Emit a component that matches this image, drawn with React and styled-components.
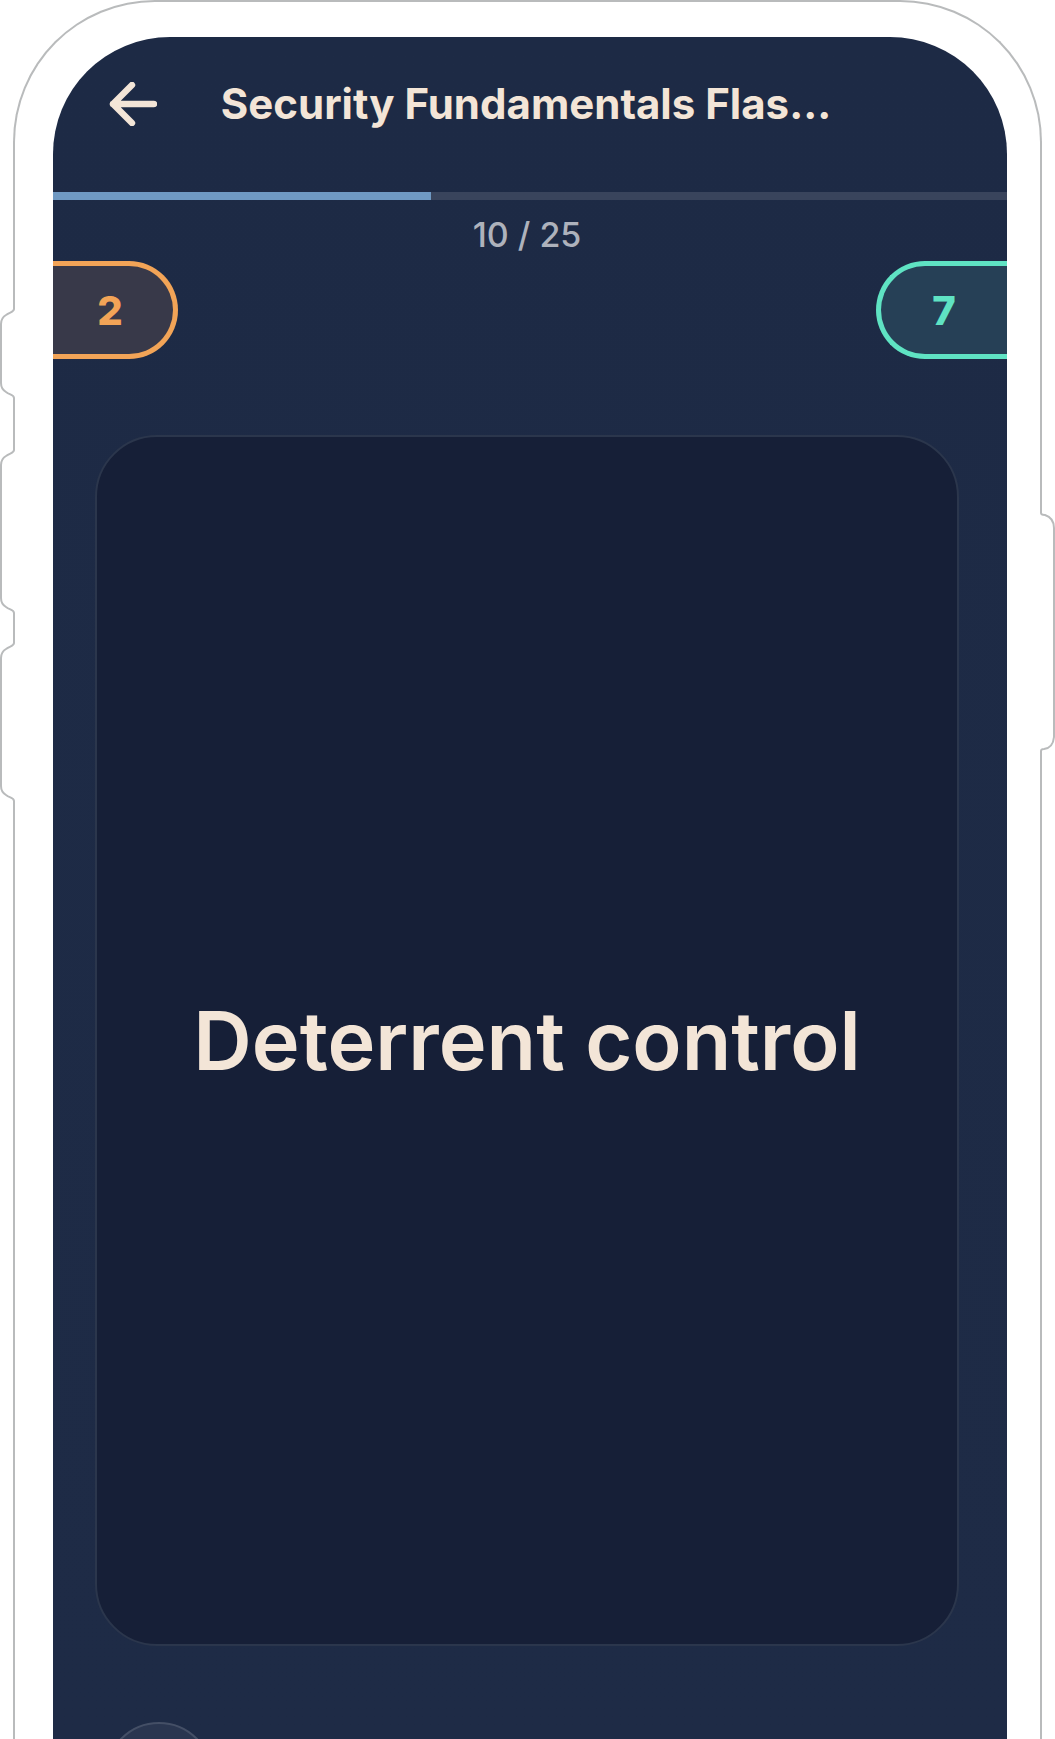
import styled, { createGlobalStyle } from "styled-components";

const GlobalStyle = createGlobalStyle`
  * {
    box-sizing: border-box;
  }

  body {
    margin: 0;
    background: #ffffff;
    font-family: Inter, "Liberation Sans", sans-serif;
  }
`;

const Phone = styled.div`
  display: flex;
  height: 100vh;
  overflow: hidden;
`;

const Rail = styled.div`
  position: relative;
  z-index: 1;
  flex: none;
  width: 13px;
  display: flex;
  flex-direction: column;
  align-items: ${(props) => (props.$right ? "flex-end" : "flex-start")};
  padding-top: ${(props) => (props.$right ? "513px" : "309px")};
`;

const SideKey = styled.svg`
  flex: none;
  display: block;
  width: 15px;
  height: ${(props) => props.$height}px;
  margin-bottom: ${(props) => props.$gap || 0}px;
  fill: none;
`;

const Bezel = styled.div`
  flex: 1;
  min-width: 0;
  display: flex;
  padding: 35px 33px 0 38px;
  border: 2px solid #b9bbbc;
  border-bottom: none;
  border-radius: 142px 142px 0 0;
  background: #ffffff;
`;

const Screen = styled.main`
  flex: 1;
  min-width: 0;
  display: flex;
  flex-direction: column;
  overflow: hidden;
  border-radius: 117px 117px 0 0;
  background: linear-gradient(#1d2a45, #1e2b46);
  color: #f3e5d7;
`;

const Header = styled.header`
  flex: none;
  display: grid;
  grid-template-columns: 48px 1fr 48px;
  align-items: center;
  height: 155px;
  padding: 0 64px 22px 56px;
`;

const BackButton = styled.button`
  display: flex;
  padding: 0;
  border: none;
  background: none;
  color: inherit;
  cursor: pointer;
`;

const Title = styled.h1`
  margin: 0;
  font-size: 42px;
  font-weight: 700;
  line-height: 52px;
  text-align: center;
  white-space: nowrap;
`;

/* runs under the bezel on both sides */
const Track = styled.div`
  flex: none;
  height: 8px;
  margin: 0 -18px;
  background: #39445c;
`;

const Fill = styled.div`
  height: 100%;
  background: #6f99c3;
`;

const Counter = styled.p`
  flex: none;
  margin: 0;
  padding: 15px 6px 6px 0;
  color: #aeb2bc;
  font-size: 34px;
  font-weight: 500;
  line-height: 40px;
  text-align: center;
`;

const Scores = styled.div`
  flex: none;
  display: flex;
  justify-content: space-between;
`;

const Score = styled.div`
  display: flex;
  align-items: center;
  justify-content: center;
  width: ${(props) => (props.$right ? "131px" : "125px")};
  height: 98px;
  border: 5px solid ${(props) => props.$color};
  background: ${(props) => props.$fill};
  color: ${(props) => props.$color};
  font-size: 40px;
  font-weight: 800;
  ${(props) =>
    props.$right
      ? "border-right: none; border-radius: 49px 0 0 49px;"
      : "padding-right: 6px; border-left: none; border-radius: 0 49px 49px 0;"}
`;

const Card = styled.section`
  flex: 1;
  min-height: 0;
  display: flex;
  align-items: center;
  justify-content: center;
  margin: 76px 48px 0 42px;
  border: 2px solid #2b364c;
  border-radius: 62px;
  background: #161f37;
`;

const Term = styled.h2`
  margin: 0;
  font-size: 81px;
  font-weight: 600;
  line-height: 104px;
  text-align: center;
`;

const Controls = styled.footer`
  flex: none;
  height: 93px;
  padding: 76px 52px 0;
  overflow: hidden;
`;

const RoundButton = styled.button`
  display: block;
  width: 108px;
  height: 108px;
  border: 2px solid #444f66;
  border-radius: 50%;
  background: #2a3650;
  cursor: pointer;
`;

function LeftKey({ height, gap }) {
  const h = height;
  return (
    <SideKey $height={h} $gap={gap} viewBox={`0 0 15 ${h}`} aria-hidden="true">
      <path d={`M11 0H15V${h}H11Z`} fill="#fff" />
      <path
        d={`M14 0C14 3 10 3 6 6Q1 9 1 15V${h - 15}Q1 ${h - 9} 6 ${h - 6}C10 ${h - 3} 14 ${h - 3} 14 ${h}`}
        stroke="#b9bbbc"
        strokeWidth="2"
        fill="#fff"
      />
    </SideKey>
  );
}

function RightKey({ height }) {
  const h = height;
  return (
    <SideKey $height={h} viewBox={`0 0 15 ${h}`} aria-hidden="true">
      <path d={`M0 0H4V${h}H0Z`} fill="#fff" />
      <path
        d={`M1 0Q1 2 5 2Q14 5 14 15V${h - 14}Q13 ${h - 3} 4 ${h - 2}Q1 ${h - 2} 1 ${h}`}
        stroke="#b9bbbc"
        strokeWidth="2"
        fill="#fff"
      />
    </SideKey>
  );
}

function App() {
  const current = 10;
  const total = 25;

  return (
    <>
      <GlobalStyle />
      <Phone>
        <Rail>
          <LeftKey height={89} gap={52} />
          <LeftKey height={163} gap={30} />
          <LeftKey height={158} />
        </Rail>
        <Bezel>
          <Screen>
            <Header>
              <BackButton aria-label="Back">
                <svg
                  width="48"
                  height="44"
                  viewBox="0 0 48 44"
                  fill="none"
                  stroke="currentColor"
                  strokeWidth="6.4"
                  strokeLinecap="round"
                  strokeLinejoin="round"
                >
                  <path d="M45 22H4M23 3L4 22L23 41" />
                </svg>
              </BackButton>
              <Title>Security Fundamentals Flas...</Title>
            </Header>
            <Track
              role="progressbar"
              aria-label="Progress"
              aria-valuenow={current}
              aria-valuemax={total}
            >
              <Fill style={{ width: `${(current / total) * 100}%` }} />
            </Track>
            <Counter>
              {current} / {total}
            </Counter>
            <Scores>
              <Score $color="#f2a457" $fill="#383949">
                2
              </Score>
              <Score $right $color="#5fe3c3" $fill="#264056">
                7
              </Score>
            </Scores>
            <Card>
              <Term>Deterrent control</Term>
            </Card>
            <Controls>
              <RoundButton aria-label="Undo" />
            </Controls>
          </Screen>
        </Bezel>
        <Rail $right>
          <RightKey height={238} />
        </Rail>
      </Phone>
    </>
  );
}

export default App;
